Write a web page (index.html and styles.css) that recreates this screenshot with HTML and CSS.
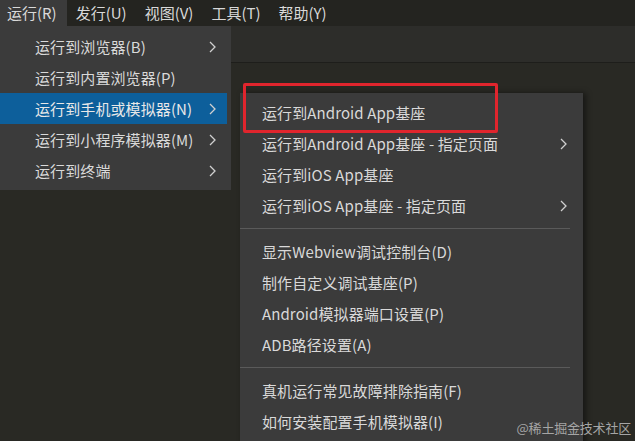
FILE: index.html
```html
<!DOCTYPE html>
<html lang="zh-CN">
<head>
  <meta charset="UTF-8">
  <title>运行菜单</title>
  <link rel="stylesheet" href="styles.css">
</head>
<body>
  <div class="app">
    <nav class="menubar">
      <span class="menubar-item active">运行(R)</span>
      <span class="menubar-item">发行(U)</span>
      <span class="menubar-item">视图(V)</span>
      <span class="menubar-item">工具(T)</span>
      <span class="menubar-item">帮助(Y)</span>
    </nav>
    <div class="toolbar"></div>

    <ul class="menu menu-run">
      <li class="item has-sub">运行到浏览器(B)<svg class="chev" viewBox="0 0 7 12"><polyline points="1,1 6,6 1,11"/></svg></li>
      <li class="item">运行到内置浏览器(P)</li>
      <li class="item has-sub selected">运行到手机或模拟器(N)<svg class="chev" viewBox="0 0 7 12"><polyline points="1,1 6,6 1,11"/></svg></li>
      <li class="item has-sub">运行到小程序模拟器(M)<svg class="chev" viewBox="0 0 7 12"><polyline points="1,1 6,6 1,11"/></svg></li>
      <li class="item has-sub">运行到终端<svg class="chev" viewBox="0 0 7 12"><polyline points="1,1 6,6 1,11"/></svg></li>
    </ul>

    <ul class="menu menu-phone">
      <li class="item">运行到Android App基座</li>
      <li class="item has-sub">运行到Android App基座 - 指定页面<svg class="chev" viewBox="0 0 7 12"><polyline points="1,1 6,6 1,11"/></svg></li>
      <li class="item">运行到iOS App基座</li>
      <li class="item has-sub">运行到iOS App基座 - 指定页面<svg class="chev" viewBox="0 0 7 12"><polyline points="1,1 6,6 1,11"/></svg></li>
      <li class="sep"></li>
      <li class="item">显示Webview调试控制台(D)</li>
      <li class="item">制作自定义调试基座(P)</li>
      <li class="item">Android模拟器端口设置(P)</li>
      <li class="item">ADB路径设置(A)</li>
      <li class="sep"></li>
      <li class="item">真机运行常见故障排除指南(F)</li>
      <li class="item">如何安装配置手机模拟器(I)</li>
    </ul>

    <div class="highlight-box"></div>
    <div class="watermark">@稀土掘金技术社区</div>
  </div>
</body>
</html>
```

FILE: styles.css
```css
:root {
  --bg: #292924;
  --bar: #242420;
  --menu: #3b3b3b;
  --text: #d9d9d9;
  --select: #0d5f9b;
  --sep: #5a5a5a;
}
* { box-sizing: border-box; margin: 0; padding: 0; }
html, body {
  width: 635px;
  height: 441px;
  overflow: hidden;
}
body {
  background: var(--bg);
  color: var(--text);
  font-family: "Noto Sans CJK SC", "Noto Sans", sans-serif;
  font-size: 15px;
}
.app {
  position: relative;
  width: 635px;
  height: 441px;
  overflow: hidden;
}
.menubar {
  display: flex;
  height: 26px;
  background: var(--bar);
}
.menubar-item {
  padding: 0 9px;
  line-height: 25px;
  white-space: nowrap;
}
.menubar-item:first-child { padding: 0 10px 0 7px; }
.menubar-item.active { background: var(--menu); }
.toolbar {
  height: 37px;
  background: #2d2d2a;
  border-bottom: 1px solid #1e1e1b;
}

/* dropdown menus sit over the editor */
.menu {
  position: absolute;
  list-style: none;
  background: var(--menu);
}
.menu-run {
  left: 0;
  top: 26px;
  width: 231px;
  padding: 5px 0 4px;
}
.menu-phone {
  left: 240px;
  top: 93px;
  width: 343px;
  height: 360px;
  padding-top: 4px;
  box-shadow: 3px 0 6px rgba(0, 0, 0, 0.45);
}
.item {
  display: flex;
  align-items: center;
  height: 31px;
  padding-left: 35px;
  padding-right: 11px;
  letter-spacing: 0.1px;
  white-space: nowrap;
}
.menu-run .item { margin-right: 4px; }
.menu-phone .item { padding-left: 22px; padding-right: 16px; }
.item.selected { background: var(--select); color: #e8e8e8; }
.chev {
  width: 7px;
  height: 12px;
  margin-left: auto;
  fill: none;
  stroke: #d0d0d0;
  stroke-width: 1.3;
}
.sep {
  height: 15px;
  display: flex;
  align-items: center;
  margin-right: 13px;
}
.sep::before {
  content: "";
  flex: 1;
  height: 1px;
  background: var(--sep);
}

.highlight-box {
  position: absolute;
  left: 243px;
  top: 83px;
  width: 255px;
  height: 50px;
  border: 3px solid #e0252d;
  border-radius: 2px;
}
.watermark {
  position: absolute;
  right: 4px;
  top: 418px;
  font-size: 13px;
  color: #a5a5a5;
  letter-spacing: -0.2px;
}
```
